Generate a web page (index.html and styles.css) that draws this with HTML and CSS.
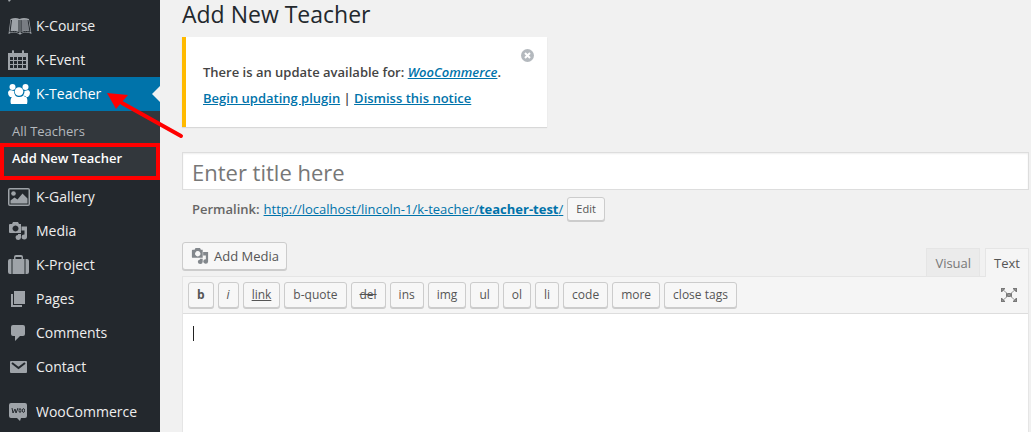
FILE: index.html
```html
<!DOCTYPE html>
<html lang="en">
<head>
<meta charset="utf-8">
<title>Add New Teacher</title>
<link rel="stylesheet" href="styles.css">
</head>
<body>
<svg class="symbols" aria-hidden="true">
  <symbol id="media" viewBox="0 0 20 20">
    <path fill-rule="evenodd" d="M2 3h2l1-2h5l1 2h2v9H2q-1 0-1-1V4q0-1 1-1zM7.500 4.500a3 3 0 1 0 .01 0z"/>
    <path d="M13.500 5.500H19V16a2.700 2.500 0 1 1-2.500-2.500v-4h-3zM10 13h3v3.500a2.700 2.500 0 1 1-3-2.500z"/>
  </symbol>
</svg>
<div class="admin">
  <nav class="sidebar" aria-label="Main menu">
    <div class="previous"><svg viewBox="0 0 24 9"><path d="M8 0h3l-2 2z"/></svg></div>
    <ul class="menu">
      <li><a class="item" href="#"><svg class="icon" viewBox="0 0 24 20"><path d="M2.500 3C6 1.500 9 1.500 11.500 3c3-1.500 6-1.500 9.500 0l2.500 15c-4-2-8-2-11 .5h-1C8 16 4.500 16 .5 18z"/><path class="page-edge" d="M3.500 4L2 16c3-1 6.500-.7 9 .8V4M20 4l2 12c-3-1-6.500-.7-9 .8V4"/><path class="page-shade" d="M13 4.500c2-1 4-1 6.500-.5l1.800 11c-3-.8-5.500-.6-8.300.6z"/></svg>K-Course</a></li>
      <li><a class="item" href="#"><svg class="icon" viewBox="0 0 24 20"><path fill-rule="evenodd" d="M0 3h4V1q1-2 2 0v2h8V1q1-2 2 0v2h4v17H0zM2 7v3h3V7zm4 0v3h3V7zm4 0v3h4V7zm5 0v3h3V7zM2 11v3h3v-3zm4 0v3h3v-3zm4 0v3h4v-3zm5 0v3h3v-3zM2 15v3h3v-3zm4 0v3h3v-3zm4 0v3h4v-3zm5 0v3h3v-3z"/></svg>K-Event</a></li>
      <li><a class="item current" href="#"><svg class="icon" viewBox="0 0 24 20"><circle cx="4.500" cy="3" r="3"/><circle cx="17.500" cy="3" r="3"/><circle cx="11" cy="7.500" r="4.300"/><path d="M0 8.500C.5 6 2.500 6 4 6.500l2 .5c0 2 .5 3 1.500 4.500L5 13H2q-2-1-2-4.500zM22 8.500C21.500 6 20 6 18.500 6.500l-2 .5c0 2-.5 3-1.500 4.500l2.500 1.500h2.500q2-1 2-4.500zM3 20c-1-3-.5-8 4-8.500 3 2 5.500 2 8.500 0 4 .5 4.500 5.500 3.500 8.500z"/></svg>K-Teacher</a>
        <ul class="submenu">
          <li><a href="#">All Teachers</a></li>
          <li class="marked"><a class="chosen" href="#">Add New Teacher</a></li>
        </ul>
      </li>
      <li><a class="item" href="#"><svg class="icon" viewBox="0 0 24 20"><path fill-rule="evenodd" d="M2 1h18q2 0 2 2v14q0 2-2 2H2q-2 0-2-2V3q0-2 2-2zm-.5 1.500v15h19v-15z"/><circle cx="5.500" cy="6.500" r="2.300"/><path d="M2.500 16.500v-3l4-3 3 2 5-6 5 5v5z"/></svg>K-Gallery</a></li>
      <li><a class="item" href="#"><svg class="icon" viewBox="0 0 24 20"><use href="#media" width="20" height="20"/></svg>Media</a></li>
      <li><a class="item" href="#"><svg class="icon" viewBox="0 0 24 20"><path fill-rule="evenodd" d="M4.500 4H6V2q0-2 2-2h5q2 0 2 2v2h1.500v15h-12zM7.500 2v2h6V2z"/><path d="M3.500 4v15H2q-2 0-2-2V6q0-2 2-2zM17.500 4v15H19q2 0 2-2V6q0-2-2-2z"/></svg>K-Project</a></li>
      <li><a class="item" href="#"><svg class="icon" viewBox="0 0 24 20"><path d="M6 2h11v13H6zM3 5h2v11h9v2H3z"/></svg>Pages</a></li>
      <li><a class="item" href="#"><svg class="icon" viewBox="0 0 24 20"><path d="M5 2h10q2 0 2 2v7q0 2-2 2h-3l-5 5v-5H5q-2 0-2-2V4q0-2 2-2z"/></svg>Comments</a></li>
      <li><a class="item" href="#"><svg class="icon" viewBox="0 0 24 20"><path d="M3 4h15q1 0 1 1v10q0 1-1 1H3q-1 0-1-1V5q0-1 1-1z"/><path class="fold" d="M4 6l6.500 5L17 6"/></svg>Contact</a></li>
      <li class="spaced"><a class="item" href="#"><svg class="icon" viewBox="0 0 24 20"><path d="M3 1h14q2 0 2 2v11q0 2-2 2h-4l-1 3-3-3H3q-2 0-2-2V3q0-2 2-2z"/><path class="woo" d="M4 6l1 5 2-4 1 4 2-5"/><ellipse class="woo" cx="12" cy="8.500" rx="1" ry="2"/><ellipse class="woo" cx="15.500" cy="8.500" rx="1" ry="2"/></svg>WooCommerce</a></li>
    </ul>
    <svg class="arrow" viewBox="0 0 80 48" aria-hidden="true"><path class="shaft" d="M15 10l59 33"/><path class="head" d="M0 0l21 2L9 16z"/></svg>
  </nav>
  <main class="content">
    <h1>Add New Teacher</h1>
    <section class="notice">
      <p>There is an update available for: <a href="#"><em>WooCommerce</em></a>.</p>
      <p><a href="#">Begin updating plugin</a> | <a href="#">Dismiss this notice</a></p>
      <button class="dismiss" type="button" aria-label="Dismiss"><svg viewBox="0 0 13 13"><circle cx="6.500" cy="6.500" r="6.500"/><path d="M4 4l5 5M9 4l-5 5"/></svg></button>
    </section>
    <input class="title" type="text" placeholder="Enter title here" aria-label="Title">
    <div class="permalink"><strong>Permalink:</strong><a href="#">http://localhost/lincoln-1/k-teacher/<b>teacher-test</b>/</a><button class="button" type="button">Edit</button></div>
    <div class="tools">
      <button class="button add" type="button"><svg viewBox="0 0 20 20"><use href="#media"/></svg>Add Media</button>
      <div class="tabs"><button class="tab" type="button">Visual</button><button class="tab active" type="button">Text</button></div>
    </div>
    <section class="editor">
      <div class="toolbar">
        <button class="button" type="button"><b>b</b></button>
        <button class="button" type="button"><i>i</i></button>
        <button class="button" type="button"><u>link</u></button>
        <button class="button" type="button">b-quote</button>
        <button class="button" type="button"><del>del</del></button>
        <button class="button" type="button">ins</button>
        <button class="button" type="button">img</button>
        <button class="button" type="button">ul</button>
        <button class="button" type="button">ol</button>
        <button class="button" type="button">li</button>
        <button class="button" type="button">code</button>
        <button class="button" type="button">more</button>
        <button class="button" type="button">close tags</button>
        <button class="expand" type="button" aria-label="Fullscreen"><svg viewBox="0 0 16 14"><path d="M5 5h6v4H5zM0 0h4v1L1 4H0zM16 0v4h-1l-3-3V0zM0 14v-4h1l3 3v1zM16 14h-4v-1l3-3h1z"/><path class="ray" d="M1 1l14 12M15 1L1 13"/></svg></button>
      </div>
      <div class="page"><textarea aria-label="Content"></textarea></div>
    </section>
  </main>
</div>
</body>
</html>
```

FILE: styles.css
```css
* { box-sizing: border-box; }
body {
  margin: 0;
  background: #f1f1f1;
  color: #444;
  font: 13px/18px "Open Sans", sans-serif;
}
button, input, textarea { font: inherit; color: inherit; margin: 0; }
button { cursor: pointer; }
ul { list-style: none; margin: 0; padding: 0; }
a { color: #0073aa; }
.symbols { position: absolute; width: 0; height: 0; }
.admin { display: flex; min-height: 100vh; }

.sidebar { position: relative; flex: 0 0 160px; background: #23282d; }
.previous { height: 9px; }
.previous svg { display: block; width: 24px; height: 9px; fill: #9ea3a8; }
.item {
  position: relative;
  display: flex;
  align-items: center;
  gap: 4px;
  height: 34px;
  padding-left: 8px;
  color: #eee;
  font-size: 14px;
  text-decoration: none;
}
.icon { width: 24px; height: 20px; fill: #9ea3a8; }
.page-edge { fill: none; stroke: #23282d; stroke-width: 1; }
.page-shade { fill: #23282d; opacity: 0.3; }
.fold { fill: none; stroke: #23282d; stroke-width: 2; }
.woo { fill: none; stroke: #23282d; stroke-width: 1; }
.current { background: #0073aa; color: #fff; }
.current .icon { fill: #fff; }
.current::after {
  content: "";
  position: absolute;
  top: 9px;
  right: 0;
  border: 8px solid transparent;
  border-left-width: 0;
  border-right-color: #f1f1f1;
}
.submenu { padding-top: 8px; background: #32373c; font-size: 13px; }
.submenu a { display: block; padding: 3px 12px; color: #b4b9be; text-decoration: none; }
.submenu .marked { height: 37px; border: 4px solid #f00; }
.submenu .chosen { padding: 2px 8px; color: #fff; font-weight: 600; }
.spaced { margin-top: 11px; }
.arrow { position: absolute; left: 107px; top: 93px; width: 80px; height: 48px; }
.head { fill: #f00; }
.shaft { stroke: #f00; stroke-width: 4; stroke-linecap: round; }

.content { display: flex; flex: 1; flex-direction: column; min-width: 0; padding: 0 2px 0 22px; }
h1 { margin: 0; color: #23282d; font-size: 23px; font-weight: 400; line-height: 28px; }
.notice {
  position: relative;
  align-self: flex-start;
  width: 365px;
  margin: 9px 0 25px;
  padding: 22px 17px 16px;
  border-left: 4px solid #ffba00;
  background: #fff;
  box-shadow: 0 1px 1px rgba(0, 0, 0, 0.1);
  font-weight: 600;
}
.notice p { margin: 0; line-height: 26px; }
.dismiss { position: absolute; top: 12px; right: 13px; padding: 0; border: 0; background: none; }
.dismiss svg { display: block; width: 13px; height: 13px; fill: #b4b9be; }
.dismiss path { stroke: #fff; stroke-width: 2; }
.title {
  width: 100%;
  height: 38px;
  padding: 2px 9px 0;
  border: 1px solid #ddd;
  background: #fff;
  box-shadow: inset 0 1px 2px rgba(0, 0, 0, 0.07);
  font-size: 22px;
}
.title::placeholder { color: #777; opacity: 1; }
.button {
  height: 26px;
  padding: 0 8px;
  border: 1px solid #ccc;
  border-radius: 3px;
  background: #f7f7f7;
  box-shadow: 0 1px 0 #ccc;
  color: #555;
  font-size: 12px;
  white-space: nowrap;
}
.permalink { display: flex; align-items: center; gap: 4px; padding: 7px 10px 0; color: #666; }
.permalink strong { font-weight: 600; }
.permalink .button { height: 24px; font-size: 11px; }
.tools { display: flex; justify-content: space-between; align-items: flex-start; margin-top: 21px; }
.add { display: flex; align-items: center; gap: 4px; height: 28px; padding: 0 7px; font-size: 13px; }
.add svg { width: 20px; height: 18px; fill: #82878c; }
.tabs { display: flex; gap: 5px; margin-top: 6px; }
.tab {
  height: 28px;
  padding: 0 8px;
  border: 1px solid #e5e5e5;
  border-bottom: 0;
  background: #ebebeb;
  color: #777;
  font-size: 13px;
}
.active { position: relative; z-index: 1; height: 29px; margin-bottom: -1px; background: #f5f5f5; color: #555; }
.editor { display: flex; flex: 1; flex-direction: column; border: 1px solid #e5e5e5; border-bottom: 0; }
.toolbar {
  display: flex;
  gap: 4px;
  padding: 5px;
  border-bottom: 1px solid #ddd;
  background: #f5f5f5;
}
.expand { margin-left: auto; padding: 0 6px; border: 0; background: none; }
.expand svg { display: block; width: 16px; height: 14px; fill: #777; }
.ray { stroke: #999; stroke-width: 1; }
.page { position: relative; display: flex; flex: 1; min-height: 80px; background: #fff; }
.page::before { content: ""; position: absolute; left: 10px; top: 12px; width: 1px; height: 15px; background: #222; }
.page textarea { flex: 1; padding: 10px; border: 0; background: #fff; resize: none; outline: 0; }
```
